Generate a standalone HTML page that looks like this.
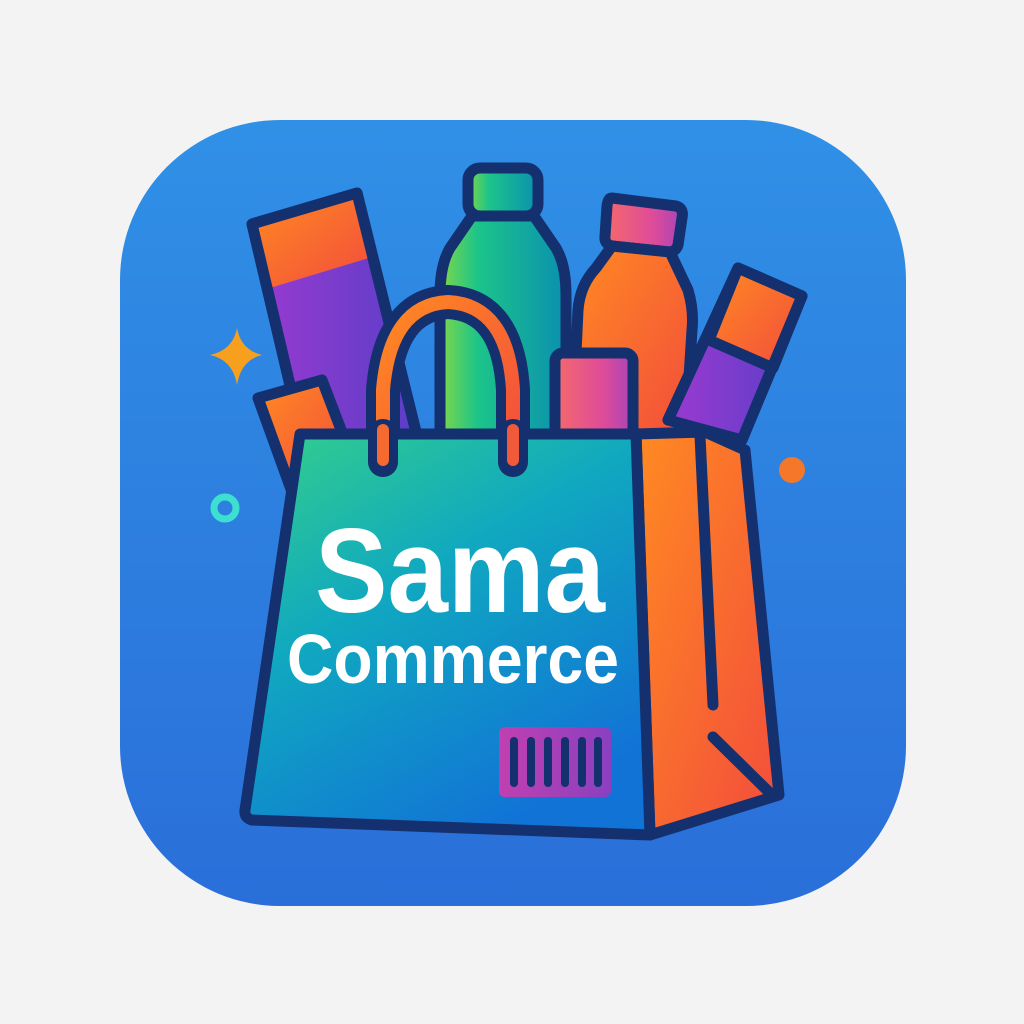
<!DOCTYPE html>
<html><head><style>
html,body{margin:0;padding:0;background:#f3f3f3;}
svg{display:block}
</style></head><body>
<svg width="1024" height="1024" viewBox="0 0 1024 1024" xmlns="http://www.w3.org/2000/svg">
<defs>
<linearGradient id="bg" x1="0" y1="0" x2="0" y2="1"><stop offset="0" stop-color="#3090e6"/><stop offset="1" stop-color="#2a6fd9"/></linearGradient>
<linearGradient id="front" x1="0" y1="0" x2="0.6" y2="1"><stop offset="0" stop-color="#34d08a"/><stop offset="0.45" stop-color="#10a8c0"/><stop offset="1" stop-color="#1173d6"/></linearGradient>
<linearGradient id="orange" x1="0" y1="0" x2="1" y2="1"><stop offset="0" stop-color="#ff8a22"/><stop offset="1" stop-color="#f24c3c"/></linearGradient>
<linearGradient id="purple" x1="0" y1="0" x2="1" y2="0"><stop offset="0" stop-color="#9a3ad0"/><stop offset="1" stop-color="#5a3ec8"/></linearGradient>
<linearGradient id="green" x1="0" y1="0" x2="1" y2="0"><stop offset="0" stop-color="#7fd848"/><stop offset="0.3" stop-color="#1cc48a"/><stop offset="1" stop-color="#0a90b0"/></linearGradient>
<linearGradient id="pink" x1="0" y1="0" x2="1" y2="0"><stop offset="0" stop-color="#f46a6a"/><stop offset="0.6" stop-color="#e04c98"/><stop offset="1" stop-color="#a844b8"/></linearGradient>
<linearGradient id="barc" x1="0" y1="0" x2="1" y2="0"><stop offset="0" stop-color="#c040b0"/><stop offset="1" stop-color="#8a40c0"/></linearGradient>
</defs>
<rect x="120" y="120" width="786" height="786" rx="160" fill="url(#bg)"/>
<g stroke="#14306e" stroke-width="11" stroke-linejoin="round" stroke-linecap="round">
<path d="M252 224 L357 193 L418 440 L310 470 Z" fill="url(#purple)"/>
<path d="M252 224 L357 193 L372 257 L270 288 Z" fill="url(#orange)" stroke="none"/>
<path d="M252 224 L357 193 L418 440 L310 470 Z" fill="none"/>
<path d="M258 398 L322 380 L345 440 L292 492 Z" fill="url(#orange)"/>
<rect x="468" y="168" width="70" height="48" rx="12" fill="url(#green)"/>
<path d="M472 216 L534 216 L556 248 Q566 265 566 295 L566 440 L440 440 L440 295 Q440 265 450 248 Z" fill="url(#green)"/>
<path d="M612 198 L676 206 Q684 208 682 218 L678 245 Q676 252 668 252 L612 246 Q604 244 605 236 L607 206 Q608 198 612 198 Z" fill="url(#pink)"/>
<path d="M612 246 L670 252 L688 290 Q694 310 692 330 L685 440 L572 440 L578 310 Q580 285 596 268 Z" fill="url(#orange)"/>
<rect x="555" y="353" width="78" height="90" rx="8" fill="url(#pink)"/>
<path d="M738 268 L802 296 L742 440 L668 420 Z" fill="url(#purple)"/>
<path d="M738 268 L802 296 L773 368 L709 340 Z" fill="url(#orange)"/>
<path d="M738 268 L802 296 L742 440 L668 420 Z" fill="none"/>
<path d="M383 462 L383 390 Q390 305 448 302 Q508 305 513 390 L513 462" fill="none" stroke="#14306e" stroke-width="34"/>
<path d="M383 462 L383 390 Q390 305 448 302 Q508 305 513 390 L513 462" fill="none" stroke="url(#orange)" stroke-width="14" stroke-linecap="round"/>
<path d="M636 434 L705 432 L745 450 L779 795 L650 835 Z" fill="url(#orange)"/>
<path d="M700 436 L713 705" fill="none"/>
<path d="M713 737 L772 795" fill="none"/>
<path d="M300 434 L636 434 L650 835 L252 820 Q244 818 245 810 Z" fill="url(#front)"/>
</g>
<g fill="none" stroke-linecap="round">
<path d="M383 434 L383 462" stroke="#14306e" stroke-width="30"/>
<path d="M513 434 L513 462" stroke="#14306e" stroke-width="30"/>
<path d="M383 430 L383 460" stroke="#f46a30" stroke-width="12"/>
<path d="M513 430 L513 460" stroke="#f05a3a" stroke-width="12"/>
</g>
<text x="460" y="612" font-family="Liberation Sans, sans-serif" font-weight="bold" font-size="120" fill="#fff" text-anchor="middle" textLength="290" lengthAdjust="spacingAndGlyphs">Sama</text>
<text x="453" y="683" font-family="Liberation Sans, sans-serif" font-weight="bold" font-size="70" fill="#fff" text-anchor="middle" textLength="332" lengthAdjust="spacingAndGlyphs">Commerce</text>
<rect x="499" y="727" width="112" height="70" rx="6" fill="url(#barc)"/>
<g stroke="#14306e" stroke-width="8" stroke-linecap="round">
<line x1="514" y1="741" x2="514" y2="783"/><line x1="531" y1="741" x2="531" y2="783"/><line x1="548" y1="741" x2="548" y2="783"/><line x1="565" y1="741" x2="565" y2="783"/><line x1="582" y1="741" x2="582" y2="783"/><line x1="598" y1="741" x2="598" y2="783"/>
</g>
<path d="M237 328 Q241 350 262 355 Q241 360 237 385 Q233 360 210 355 Q233 350 237 328 Z" fill="#f7a01e"/>
<circle cx="225" cy="508" r="11" fill="none" stroke="#3de0d0" stroke-width="7"/>
<circle cx="792" cy="470" r="13" fill="#f5782a"/>
</svg>
</body></html>
